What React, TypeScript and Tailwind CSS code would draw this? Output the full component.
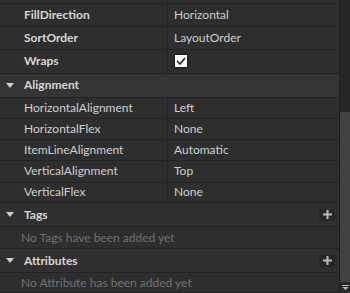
import React from "react";

type Prop = { name: string; value?: string; bold?: boolean; check?: boolean; h: string };

function Triangle() {
  return (
    <svg width="8" height="5" viewBox="0 0 8 5" className="ml-[6px] mr-[10px]">
      <path d="M0 0 L8 0 L4 5 Z" fill="#cfcfcf" />
    </svg>
  );
}

function PlusButton() {
  return (
    <div className="w-[16px] h-[12px] bg-[#262626] flex items-center justify-center mr-[4px]">
      <svg width="9" height="9" viewBox="0 0 9 9">
        <rect x="3.5" y="0" width="2" height="9" fill="#bdbdbd" />
        <rect x="0" y="3.5" width="9" height="2" fill="#bdbdbd" />
      </svg>
    </div>
  );
}

function PropRow({ p }: { p: Prop }) {
  return (
    <div className={`flex border-b border-[#232323] bg-[#2e2e2e] ${p.h}`}>
      <div
        className={`w-[168px] shrink-0 pl-[24px] flex items-center border-r border-[#232323] ${
          p.bold ? "font-bold text-[#d6d6d6]" : "text-[#cfcfcf]"
        }`}
      >
        {p.name}
      </div>
      <div className="flex-1 pl-[6px] flex items-center text-[#cfcfcf]">
        {p.check ? (
          <div className="w-[14px] h-[14px] bg-white border border-[#1b1b1b] flex items-center justify-center">
            <svg width="10" height="8" viewBox="0 0 10 8">
              <path d="M1 4 L4 7 L9 1" fill="none" stroke="#1e1e1e" strokeWidth="1.6" />
            </svg>
          </div>
        ) : (
          p.value
        )}
      </div>
    </div>
  );
}

function Header({ title, h, plus, bg }: { title: string; h: string; plus?: boolean; bg: string }) {
  return (
    <div className={`flex items-center border-b border-[#232323] ${bg} ${h}`}>
      <Triangle />
      <span className="font-bold text-[#d6d6d6] flex-1">{title}</span>
      {plus && <PlusButton />}
    </div>
  );
}

function Empty({ text, h }: { text: string; h: string }) {
  return (
    <div className={`flex items-center pl-[21px] border-b border-[#232323] bg-[#2e2e2e] text-[#727272] whitespace-nowrap overflow-hidden ${h}`}>
      {text}
    </div>
  );
}

export default function App() {
  const top: Prop[] = [
    { name: "FillDirection", value: "Horizontal", bold: true, h: "h-[23px]" },
    { name: "SortOrder", value: "LayoutOrder", bold: true, h: "h-[23px]" },
    { name: "Wraps", check: true, bold: true, h: "h-[24px]" },
  ];
  const align: Prop[] = [
    { name: "HorizontalAlignment", value: "Left", h: "h-[21px]" },
    { name: "HorizontalFlex", value: "None", h: "h-[21px]" },
    { name: "ItemLineAlignment", value: "Automatic", h: "h-[21px]" },
    { name: "VerticalAlignment", value: "Top", h: "h-[22px]" },
    { name: "VerticalFlex", value: "None", h: "h-[20px]" },
  ];
  return (
    <div className="w-[350px] h-[293px] overflow-hidden flex bg-[#2e2e2e] text-[12px] font-['Lato',sans-serif] leading-none">
      <div className="flex-1 flex flex-col min-w-0">
        <div className="h-[4px] shrink-0 flex border-b border-[#232323]">
          <div className="w-[168px] border-r border-[#232323]" />
        </div>
        {top.map((p) => (
          <PropRow key={p.name} p={p} />
        ))}
        <Header title="Alignment" h="h-[25px]" bg="bg-[#353535]" />
        {align.map((p) => (
          <PropRow key={p.name} p={p} />
        ))}
        <Header title="Tags" h="h-[25px]" plus bg="bg-[#303030]" />
        <Empty text="No Tags have been added yet" h="h-[22px]" />
        <Header title="Attributes" h="h-[24px]" plus bg="bg-[#303030]" />
        <Empty text="No Attribute has been added yet" h="h-[20px]" />
      </div>
      <div className="w-[11px] shrink-0 flex flex-col bg-[#262626] border-l border-[#1f1f1f]">
        <div className="h-[112px]" />
        <div className="flex-1 bg-[#424242]" />
        <div className="h-[11px] flex items-center justify-center bg-[#2a2a2a]">
          <svg width="7" height="5" viewBox="0 0 7 5">
            <rect x="0" y="0" width="7" height="1" fill="#bbbbbb" />
            <path d="M0.5 2 L6.5 2 L3.5 5 Z" fill="#bbbbbb" />
          </svg>
        </div>
      </div>
    </div>
  );
}
